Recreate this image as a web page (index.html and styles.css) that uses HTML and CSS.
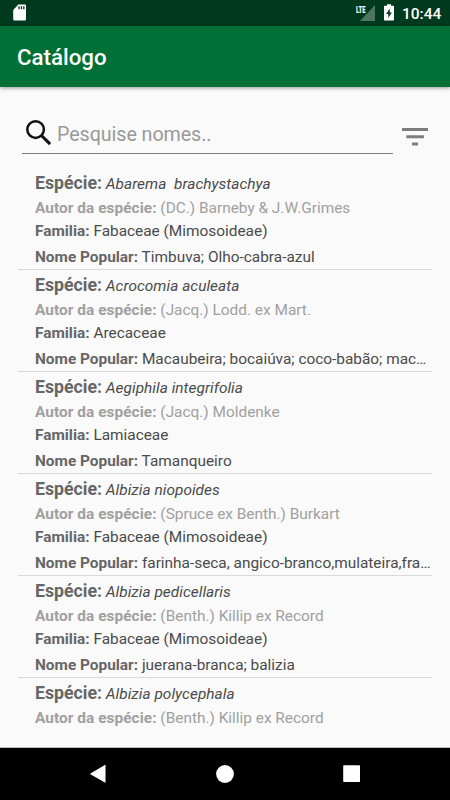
FILE: index.html
```html
<!DOCTYPE html>
<html lang="pt-BR">
<head>
<meta charset="utf-8">
<meta name="viewport" content="width=device-width">
<title>Catálogo</title>
<link rel="stylesheet" href="styles.css">
</head>
<body>
<div class="status">
  <svg class="sd" width="14" height="17" viewBox="0 0 14 17"><path fill="#fff" d="M5.3.5h6.4c.8 0 1.3.5 1.3 1.300v13.200c0 .8-.5 1.500-1.300 1.500H1.500C.7 16.500.2 15.800.2 15V6z"/><path fill="#003a1e" d="M5.400 2.200h1.300v3H5.400zM7.800 2.200h1.300v3H7.800zM10.200 2.200h1.300v3h-1.300z"/></svg>
  <span class="lte">LTE</span>
  <svg class="signal" width="15" height="16" viewBox="0 0 15 16"><path fill="#4d7561" d="M15 0v16H0z"/></svg>
  <svg class="battery" width="10" height="17" viewBox="0 0 10 17"><path fill="#fff" d="M3 .3h4v1.500h2c.6 0 1 .4 1 1V15.500c0 .6-.4 1-1 1H1c-.6 0-1-.4-1-1V2.800c0-.6.4-1 1-1h2z"/><path fill="#003a1e" d="M5.800 4.500v4H7.900L4.300 14V10H2.100z"/></svg>
  <span class="clock">10:44</span>
</div>
<header class="bar"><h1>Catálogo</h1></header>
<main class="content">
  <div class="search">
    <div class="field">
      <svg width="26" height="26" viewBox="0 0 26 26" fill="none" stroke="#111"><circle cx="9.600" cy="9.600" r="8.300" stroke-width="2.500"/><path d="M15.500 15.500l8.600 8.600" stroke-width="3"/></svg>
      <span>Pesquise nomes..</span>
    </div>
    <svg class="filter" width="26" height="18" viewBox="0 0 26 18" fill="#7d7d7d"><path d="M0 0h26v3H0zM4.300 7.200h17.600v3H4.300zM10 14.500h6v3h-6z"/></svg>
  </div>
  <ul class="list">
    <li><p class="species"><b>Espécie:</b> <i>Abarema&nbsp; brachystachya</i></p><p class="author"><b>Autor da espécie:</b> (DC.) Barneby &amp; J.W.Grimes</p><p class="family"><b>Familia:</b> Fabaceae (Mimosoideae)</p><p class="popular"><b>Nome Popular:</b> Timbuva; Olho-cabra-azul</p></li>
    <li><p class="species"><b>Espécie:</b> <i>Acrocomia aculeata</i></p><p class="author"><b>Autor da espécie:</b> (Jacq.) Lodd. ex Mart.</p><p class="family"><b>Familia:</b> Arecaceae</p><p class="popular"><b>Nome Popular:</b> Macaubeira; bocaiúva; coco-babão; mac…</p></li>
    <li><p class="species"><b>Espécie:</b> <i>Aegiphila integrifolia</i></p><p class="author"><b>Autor da espécie:</b> (Jacq.) Moldenke</p><p class="family"><b>Familia:</b> Lamiaceae</p><p class="popular"><b>Nome Popular:</b> Tamanqueiro</p></li>
    <li><p class="species"><b>Espécie:</b> <i>Albizia niopoides</i></p><p class="author"><b>Autor da espécie:</b> (Spruce ex Benth.) Burkart</p><p class="family"><b>Familia:</b> Fabaceae (Mimosoideae)</p><p class="popular"><b>Nome Popular:</b> farinha-seca, angico-branco,mulateira,fra…</p></li>
    <li><p class="species"><b>Espécie:</b> <i>Albizia pedicellaris</i></p><p class="author"><b>Autor da espécie:</b> (Benth.) Killip ex Record</p><p class="family"><b>Familia:</b> Fabaceae (Mimosoideae)</p><p class="popular"><b>Nome Popular:</b> juerana-branca; balizia</p></li>
    <li><p class="species"><b>Espécie:</b> <i>Albizia polycephala</i></p><p class="author"><b>Autor da espécie:</b> (Benth.) Killip ex Record</p></li>
  </ul>
</main>
<nav class="nav">
  <svg width="18" height="20" viewBox="0 0 18 20"><path fill="#fff" d="M15.500 1.200v17.200q0 .5-.6.200L.8 10.600q-1-.7 0-1.400L14.900 1q.6-.3.6.2z"/></svg>
  <svg width="18" height="20" viewBox="0 0 18 20"><circle cx="8" cy="10" r="8.900" fill="#fff"/></svg>
  <svg width="18" height="20" viewBox="0 0 18 20"><rect x=".2" y="1.300" width="16.800" height="16.800" rx=".8" fill="#fff"/></svg>
</nav>
</body>
</html>
```

FILE: styles.css
```css
* { box-sizing: border-box; margin: 0; padding: 0; }
body { width: 450px; height: 800px; overflow: hidden; display: flex; flex-direction: column; background: #fafafa; font-family: Roboto, sans-serif; color: #4a4a4a; }
svg { display: block; flex: none; overflow: visible; }
.status { height: 26px; flex: none; display: flex; align-items: flex-start; background: #003a1e; color: #fff; padding: 0 9px 0 13px; }
.sd { margin-top: 4px; }
.lte { margin: 5px 0 0 auto; width: 11px; font: 900 9.500px/9px Roboto, sans-serif; white-space: nowrap; transform: scaleX(.62); transform-origin: left; }
.signal { margin: 5px 0 0 -7px; }
.battery { margin: 4px 0 0 9px; }
.clock { margin-left: 8px; width: 39px; font-size: 15.500px; font-weight: 500; line-height: 28px; white-space: nowrap; }
.bar { height: 61px; flex: none; background: #007036; color: #fff; padding-left: 17px; box-shadow: 0 1px 4px rgba(0,0,0,.4); position: relative; }
h1 { font-size: 22.300px; font-weight: 500; line-height: 63px; }
.content { flex: 1; min-height: 0; overflow: hidden; padding: 31px 18px 0; border-bottom: 1px solid #bbb; }
.search { display: flex; height: 50px; padding-left: 4px; }
.field { display: flex; width: 371px; height: 36px; border-bottom: 1px solid #7d7d7d; padding: 2px 0 0 4px; color: #999; font-size: 19.700px; line-height: 30px; letter-spacing: -.07px; }
.field span { margin-left: 5px; }
.filter { margin: 10px 0 0 9px; }
.list { list-style: none; }
.list li { height: 102px; padding-left: 17px; border-bottom: 1px solid #d9d9d9; }
.list li:last-child { border-bottom: 0; }
.list p { font-size: 15.400px; white-space: nowrap; }
.list b { font-weight: 700; color: #666; }
.list .species { height: 27px; line-height: 30px; }
.species b { font-size: 17.700px; }
.species i { letter-spacing: .04px; }
.list .author { height: 23px; line-height: 27px; color: #a0a0a0; }
.list .author b { color: #a0a0a0; letter-spacing: .05px; }
.family { height: 26px; line-height: 26px; }
.popular { height: 25px; line-height: 27px; }
.nav { height: 52px; flex: none; background: #000; display: flex; justify-content: space-between; padding: 16px 89px 0 90px; }
```
